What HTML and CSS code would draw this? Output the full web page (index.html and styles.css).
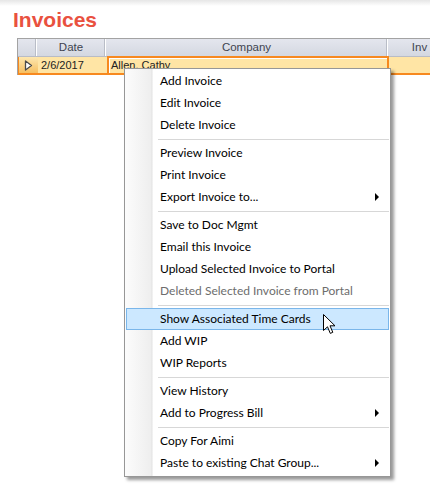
FILE: index.html
```html
<!DOCTYPE html>
<html lang="en">
<head>
    <meta charset="UTF-8">
    <title>Invoices</title>
    <link rel="stylesheet" href="styles.css">
</head>
<body>
    <div class="top-fade"></div>
    <h1 class="title">Invoices</h1>

    <div class="grid">
        <div class="grid-head">
            <div class="cell sel-col"></div>
            <div class="cell date-col">Date</div>
            <div class="cell company-col">Company</div>
            <div class="cell inv-col">Inv</div>
        </div>
        <div class="grid-row selected">
            <div class="cell sel-col">
                <svg width="9" height="11" viewBox="0 0 9 11"><path d="M1.5 1 L7.5 5.5 L1.5 10 Z" fill="#fff" stroke="#4b4b4b" stroke-width="1.3" stroke-linejoin="round"/></svg>
            </div>
            <div class="cell date-col">2/6/2017</div>
            <div class="cell company-col focused">Allen, Cathy</div>
            <div class="cell inv-col"></div>
        </div>
    </div>

    <!-- context menu -->
    <div class="menu">
        <div class="item">Add Invoice</div>
        <div class="item">Edit Invoice</div>
        <div class="item">Delete Invoice</div>
        <div class="sep"></div>
        <div class="item">Preview Invoice</div>
        <div class="item">Print Invoice</div>
        <div class="item sub">Export Invoice to...</div>
        <div class="sep"></div>
        <div class="item">Save to Doc Mgmt</div>
        <div class="item">Email this Invoice</div>
        <div class="item">Upload Selected Invoice to Portal</div>
        <div class="item disabled">Deleted Selected Invoice from Portal</div>
        <div class="sep"></div>
        <div class="item hover">Show Associated Time Cards</div>
        <div class="item">Add WIP</div>
        <div class="item">WIP Reports</div>
        <div class="sep"></div>
        <div class="item">View History</div>
        <div class="item sub">Add to Progress Bill</div>
        <div class="sep"></div>
        <div class="item">Copy For Aimi</div>
        <div class="item sub">Paste to existing Chat Group...</div>
    </div>

    <svg class="cursor" width="14" height="22" viewBox="0 0 14 22">
        <path d="M0.5 0.5 L0.5 16.5 L4.5 12.8 L7.3 19.4 L9.8 18.3 L7 11.8 L12 11.8 Z" fill="#fff" stroke="#000" stroke-width="1" stroke-linejoin="miter"/>
    </svg>
</body>
</html>
```

FILE: styles.css
```css
body {
    margin: 0;
    background: #fff;
    font-family: "Liberation Sans", Arial, sans-serif;
    width: 430px;
    height: 494px;
    overflow: hidden;
    position: relative;
}
.top-fade {
    height: 6px;
    background: linear-gradient(#e6e6e6, #fff);
}
.title {
    margin: 3px 0 0 13px;
    font-size: 21px;
    font-weight: bold;
    color: #e9513f;
    line-height: 22px;
    height: 29px;
}
.grid {
    margin-left: 17px;
    border-top: 1px solid #a3a3a3;
    border-left: 1px solid #a3a3a3;
    font-size: 11px;
}
.grid-head, .grid-row {
    display: flex;
    white-space: nowrap;
}
.grid-head {
    height: 17px;
    background: linear-gradient(#e4e6ee, #d4d8e1);
    border-bottom: 1px solid #b8bcc6;
    color: #3e4450;
    font-size: 11.5px;
}
.grid-head .cell {
    text-align: center;
    line-height: 17px;
    border-right: 1px solid #fff;
    box-shadow: inset -1px 0 0 #b9bdc7;
}
.cell {
    box-sizing: border-box;
    overflow: hidden;
    flex: none;
}
.sel-col { width: 19px; }
.date-col { width: 69px; }
.company-col { width: 282px; }
.inv-col { width: 64px; }
.grid-row {
    height: 16px;
    background: #ffe5a5;
    border-bottom: 2px solid #f7891f;
    box-shadow: inset 2px 0 0 #f7891f;
    color: #222;
    line-height: 16px;
}
.grid-row .sel-col {
    background: linear-gradient(#fde7b0, #f6bf62);
    margin-left: 1px;
    display: flex;
    align-items: center;
    padding-left: 5px;
}
.grid-row .date-col {
    padding-left: 3px;
}
.grid-row .focused {
    border: 2px solid #f7891f;
    border-bottom: none;
    box-shadow: inset 1px 1px 0 #fff;
    padding-left: 2px;
    line-height: 15px;
    margin-top: -1px;
}

.menu {
    position: absolute;
    left: 124px;
    top: 68px;
    width: 263px;
    padding: 1px 1px 2px 1px;
    border: 1px solid #979797;
    background: linear-gradient(to right, #fcfcfc 0, #eeeeee 26px, #e2e2e2 27px, #fff 28px, #fff 100%);
    box-shadow: 3px 3px 3px rgba(0, 0, 0, 0.4);
    font-family: Lato, "Noto Sans", sans-serif;
    font-size: 12px;
    color: #000;
}
.item {
    height: 22px;
    line-height: 22px;
    padding-left: 34px;
    box-sizing: border-box;
    position: relative;
}
.item.disabled {
    color: #6d6d6d;
}
.item.hover {
    background: #cce8ff;
    border: 1px solid #7ab6ea;
    line-height: 20px;
    padding-left: 33px;
}
.item.sub::after {
    content: "";
    position: absolute;
    right: 10px;
    top: 7px;
    border-left: 4px solid #000;
    border-top: 4px solid transparent;
    border-bottom: 4px solid transparent;
}
.sep {
    height: 6px;
    margin-left: 32px;
    background: linear-gradient(transparent 3px, #d7d7d7 3px, #d7d7d7 4px, transparent 4px);
}
.cursor {
    position: absolute;
    left: 323px;
    top: 314px;
}
```
